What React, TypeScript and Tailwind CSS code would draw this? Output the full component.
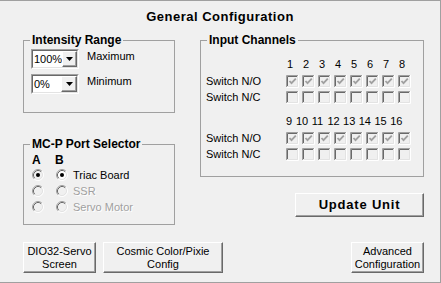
import React from "react";

const FONT = "font-['Liberation_Sans',Arial,sans-serif]";

function Raised({ className = "", children }: { className?: string; children?: React.ReactNode }) {
  return (
    <div
      className={`flex items-center justify-center border border-t-white border-l-white border-r-[#696969] border-b-[#696969] bg-[#f0f0f0] shadow-[inset_-1px_-1px_0_#a0a0a0] ${className}`}
    >
      {children}
    </div>
  );
}

function Combo({ value }: { value: string }) {
  return (
    <div className="h-[20px] w-[48px] border border-t-[#a0a0a0] border-l-[#a0a0a0] border-r-white border-b-white">
      <div className="flex h-full w-full border border-t-[#696969] border-l-[#696969] border-r-[#e3e3e3] border-b-[#e3e3e3] bg-white">
        <span className="flex-1 pl-[1px] leading-[16px]">{value}</span>
        <Raised className="h-[16px] w-[16px]">
          <svg width="7" height="4" viewBox="0 0 7 4">
            <path d="M0 0h7L3.5 4z" fill="#000" />
          </svg>
        </Raised>
      </div>
    </div>
  );
}

function Check({ checked }: { checked: boolean }) {
  return (
    <svg width="13" height="13" viewBox="0 0 13 13" className="block">
      <rect x="0" y="0" width="13" height="13" fill="#f0f0f0" />
      <path d="M0.5 12V0.5H12" stroke="#a0a0a0" fill="none" />
      <path d="M1.5 11V1.5H11" stroke="#696969" fill="none" />
      <path d="M0.5 12.5H12.5V0" stroke="#fff" fill="none" />
      <path d="M1.5 11.5H11.5V1" stroke="#e3e3e3" fill="none" />
      {checked && <path d="M3.5 6L5.5 8.2L9.8 3.6" stroke="#a0a0a0" strokeWidth="1.8" fill="none" />}
    </svg>
  );
}

function Radio({ checked, enabled }: { checked: boolean; enabled: boolean }) {
  return (
    <svg width="12" height="12" viewBox="0 0 12 12" className="block">
      <circle cx="6" cy="6" r="5" fill={enabled ? "#fff" : "#f0f0f0"} />
      <path d="M2.11 9.89A5.5 5.5 0 0 1 9.89 2.11" stroke="#a0a0a0" fill="none" />
      <path d="M9.89 2.11A5.5 5.5 0 0 1 2.11 9.89" stroke="#fff" fill="none" />
      <path d="M2.82 9.18A4.5 4.5 0 0 1 9.18 2.82" stroke="#696969" fill="none" />
      <path d="M9.18 2.82A4.5 4.5 0 0 1 2.82 9.18" stroke="#e3e3e3" fill="none" />
      {checked && <circle cx="6" cy="6" r="2" fill="#000" />}
    </svg>
  );
}

const legend = "ml-[6px] px-[2px] text-[12px] font-bold leading-[13px]";
const cols = [0, 1, 2, 3, 4, 5, 6, 7];

function ChannelRows({ first }: { first: number }) {
  return (
    <>
      <div className="flex h-[14px] items-center pl-[80px]">
        {first === 1 ? (
          cols.map((c) => (
            <span key={c} className="w-[16px] pl-[1px]">
              {c + 1}
            </span>
          ))
        ) : (
          <>
            <span className="w-[10px]">9</span>
            {cols.slice(1).map((c) => (
              <span key={c} className="w-[15.7px]">
                {c + 9}
              </span>
            ))}
          </>
        )}
      </div>
      {["Switch N/O", "Switch N/C"].map((label, r) => (
        <div key={label} className={`flex h-[16px] items-center ${r === 0 ? "mt-[2px]" : ""}`}>
          <span className="w-[80px]">{label}</span>
          {cols.map((c) => (
            <span key={c} className="w-[16px]">
              <Check checked={r === 0} />
            </span>
          ))}
        </div>
      ))}
    </>
  );
}

export default function App() {
  const ports = [
    { label: "Triac Board", a: true, b: true, on: true },
    { label: "SSR", a: false, b: false, on: false },
    { label: "Servo Motor", a: false, b: false, on: false },
  ];

  return (
    <div className={`h-[283px] w-[441px] border-t border-r border-b border-[#a0a0a0] bg-[#f0f0f0] text-[11px] text-black ${FONT}`}>
      <div className="h-[33px] pt-[8px] text-center text-[13px] font-bold leading-[16px] tracking-[0.5px]">
        General Configuration
      </div>

      <div className="flex pl-[23px]">
        <div className="flex w-[152px] flex-col">
          <fieldset className="h-[79px] border border-[#a0a0a0]">
            <legend className={legend}>Intensity Range</legend>
            <div className="flex flex-col gap-[5px] pl-[7px] pt-[2px]">
              <div className="flex items-start">
                <Combo value="100%" />
                <span className="ml-[8px] leading-[14px]">Maximum</span>
              </div>
              <div className="flex items-start">
                <Combo value="0%" />
                <span className="ml-[8px] leading-[14px]">Minimum</span>
              </div>
            </div>
          </fieldset>

          <fieldset className="mt-[25px] h-[87px] border border-[#a0a0a0]">
            <legend className={legend}>MC-P Port Selector</legend>
            <div className="flex flex-col pl-[7px] pt-[3px]">
              <div className="flex text-[12px] font-bold leading-[13px]">
                <span className="w-[24px] pl-[1px]">A</span>
                <span>B</span>
              </div>
              {ports.map((p) => (
                <div key={p.label} className="flex h-[16px] items-center">
                  <span className="w-[24px] pl-[1px]">
                    <Radio checked={p.a} enabled={false} />
                  </span>
                  <span className="w-[18px] pl-[1px]">
                    <Radio checked={p.b} enabled={p.on} />
                  </span>
                  <span
                    className={
                      p.on ? "" : "text-[#a0a0a0] [text-shadow:1px_1px_0_#fff]"
                    }
                  >
                    {p.label}
                  </span>
                </div>
              ))}
            </div>
          </fieldset>
        </div>

        <div className="ml-[25px] flex w-[224px] flex-col">
          <fieldset className="h-[143px] border border-[#a0a0a0]">
            <legend className={legend}>Input Channels</legend>
            <div className="flex flex-col pl-[5px] pt-[10px]">
              <ChannelRows first={1} />
              <div className="h-[9px]" />
              <ChannelRows first={9} />
            </div>
          </fieldset>
          <Raised className="ml-[95px] mt-[16px] h-[24px] w-[129px] text-[13px] font-bold tracking-[0.8px]">
            Update Unit
          </Raised>
        </div>
      </div>

      <div className="mt-[17px] flex pl-[23px] pr-[16px] leading-[13px]">
        <Raised className="h-[31px] w-[73px] text-center">
          DIO32-Servo
          <br />
          Screen
        </Raised>
        <Raised className="ml-[7px] h-[31px] w-[120px] text-center">
          Cosmic Color/Pixie
          <br />
          Config
        </Raised>
        <Raised className="ml-auto h-[31px] w-[73px] text-center">
          Advanced
          <br />
          Configuration
        </Raised>
      </div>
    </div>
  );
}
